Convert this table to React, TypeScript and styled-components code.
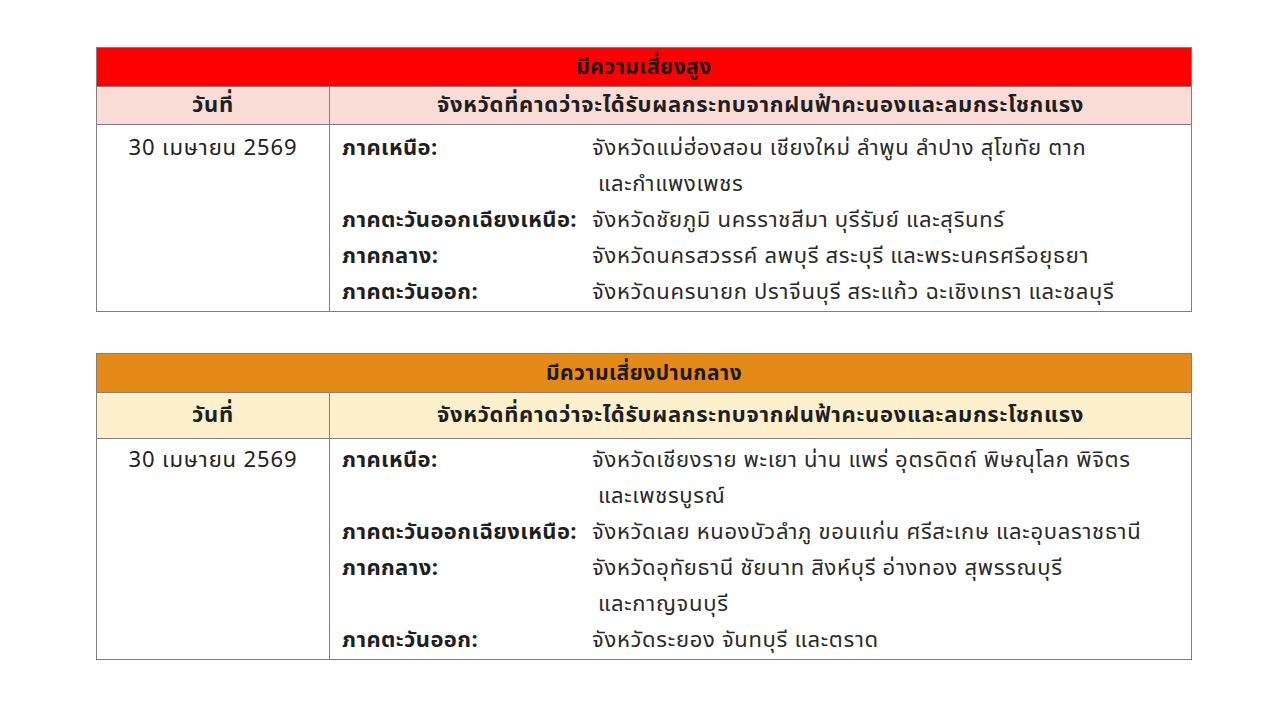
import React from "react";
import styled, { createGlobalStyle } from "styled-components";

const Global = createGlobalStyle`
  html, body { margin: 0; padding: 0; background: #ffffff; }
  body { font-family: "Noto Sans Thai", "Noto Sans", "DejaVu Sans", sans-serif; color: #222; }
`;

const Page = styled.div`
  width: 1280px;
  height: 718px;
  padding: 47px 0 0 96px;
  box-sizing: border-box;
  display: flex;
  flex-direction: column;
  align-items: flex-start;
  gap: 41px;
`;

const Table = styled.section`
  width: 1096px;
  border: 1px solid #808080;
  box-sizing: border-box;
`;

const Title = styled.div<{ $bg: string }>`
  height: 38px;
  background: ${(p) => p.$bg};
  border-bottom: 1px solid #808080;
  display: flex;
  align-items: center;
  justify-content: center;
  font-size: 21px;
  font-weight: 700;
  letter-spacing: 0.5px;
  color: #1a1a1a;
`;

const HeadRow = styled.div<{ $bg: string; $h: number }>`
  display: grid;
  grid-template-columns: 232px 1fr;
  height: ${(p) => p.$h}px;
  background: ${(p) => p.$bg};
  border-bottom: 1px solid #808080;
`;

const HeadCell = styled.div`
  display: flex;
  align-items: center;
  justify-content: center;
  font-size: 22px;
  font-weight: 700;
  letter-spacing: 0.7px;
  color: #1f1f1f;
  & + & { border-left: 1px solid #808080; }
`;

const Body = styled.div`
  display: grid;
  grid-template-columns: 232px 1fr;
`;

const DateCell = styled.div<{ $pt: number }>`
  padding-top: ${(p) => p.$pt}px;
  text-align: center;
  font-size: 22px;
  letter-spacing: 0.9px;
  line-height: 36px;
  color: #222;
`;

const Regions = styled.div<{ $pt: number }>`
  border-left: 1px solid #808080;
  padding: ${(p) => p.$pt}px 0 0 12px;
  display: grid;
  grid-template-columns: 250px 1fr;
  font-size: 22px;
  line-height: 36px;
  letter-spacing: 0.7px;
`;

const Label = styled.div`
  font-weight: 700;
  letter-spacing: 0.4px;
  color: #1f1f1f;
`;

const Value = styled.div`
  color: #2a2a2a;
`;

const Cont = styled.div`
  padding-left: 6px;
`;

type Region = { label: string; lines: string[] };
type Risk = {
  title: string;
  titleBg: string;
  headBg: string;
  headH: number;
  pt: number;
  regions: Region[];
};

const data: Risk[] = [
  {
    title: "มีความเสี่ยงสูง",
    titleBg: "#ff0000",
    headBg: "#f9dcd6",
    headH: 37,
    pt: 6,
    regions: [
      { label: "ภาคเหนือ:", lines: ["จังหวัดแม่ฮ่องสอน เชียงใหม่ ลำพูน ลำปาง สุโขทัย ตาก", "และกำแพงเพชร"] },
      { label: "ภาคตะวันออกเฉียงเหนือ:", lines: ["จังหวัดชัยภูมิ นครราชสีมา บุรีรัมย์ และสุรินทร์"] },
      { label: "ภาคกลาง:", lines: ["จังหวัดนครสวรรค์ ลพบุรี สระบุรี และพระนครศรีอยุธยา"] },
      { label: "ภาคตะวันออก:", lines: ["จังหวัดนครนายก ปราจีนบุรี สระแก้ว ฉะเชิงเทรา และชลบุรี"] },
    ],
  },
  {
    title: "มีความเสี่ยงปานกลาง",
    titleBg: "#e58a17",
    headBg: "#fdf0cd",
    headH: 45,
    pt: 4,
    regions: [
      { label: "ภาคเหนือ:", lines: ["จังหวัดเชียงราย พะเยา น่าน แพร่ อุตรดิตถ์ พิษณุโลก พิจิตร", "และเพชรบูรณ์"] },
      { label: "ภาคตะวันออกเฉียงเหนือ:", lines: ["จังหวัดเลย หนองบัวลำภู ขอนแก่น ศรีสะเกษ และอุบลราชธานี"] },
      { label: "ภาคกลาง:", lines: ["จังหวัดอุทัยธานี ชัยนาท สิงห์บุรี อ่างทอง สุพรรณบุรี", "และกาญจนบุรี"] },
      { label: "ภาคตะวันออก:", lines: ["จังหวัดระยอง จันทบุรี และตราด"] },
    ],
  },
];

export default function App() {
  return (
    <>
      <Global />
      <Page>
        {data.map((t) => (
          <Table key={t.title}>
            <Title $bg={t.titleBg}>{t.title}</Title>
            <HeadRow $bg={t.headBg} $h={t.headH}>
              <HeadCell>วันที่</HeadCell>
              <HeadCell>จังหวัดที่คาดว่าจะได้รับผลกระทบจากฝนฟ้าคะนองและลมกระโชกแรง</HeadCell>
            </HeadRow>
            <Body>
              <DateCell $pt={t.pt}>30 เมษายน 2569</DateCell>
              <Regions $pt={t.pt}>
                {t.regions.map((r) => (
                  <React.Fragment key={r.label}>
                    <Label>{r.label}</Label>
                    <Value>
                      {r.lines.map((l, i) =>
                        i === 0 ? <div key={i}>{l}</div> : <Cont key={i}>{l}</Cont>
                      )}
                    </Value>
                  </React.Fragment>
                ))}
              </Regions>
            </Body>
          </Table>
        ))}
      </Page>
    </>
  );
}
